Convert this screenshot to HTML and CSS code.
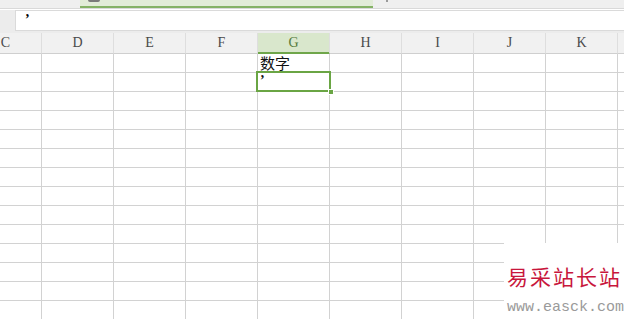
FILE: index.html
```html
<!DOCTYPE html>
<html>
	<head>
		<meta charset="UTF-8">
		<title>数字</title>
		<link rel="stylesheet" href="styles.css">
	</head>
	<body>
		<div class="tabs">
			<div class="tab"><span class="tab-icon"></span></div>
			<span class="tab-mark"></span>
		</div>
		<div class="formula">
			<div class="formula-input">’</div>
		</div>
		<table class="sheet">
			<thead>
				<tr>
					<th>C</th><th>D</th><th>E</th><th>F</th><th class="cur">G</th>
					<th>H</th><th>I</th><th>J</th><th>K</th><th class="edge"></th>
				</tr>
			</thead>
			<tbody id="rows"></tbody>
		</table>
		<div class="mark">
			<p class="mark-name">易采站长站</p>
			<p class="mark-url">www.easck.com</p>
		</div>
		<script type="text/javascript">
			var body = document.getElementById('rows');
			//生成空白行
			for(var i=0;i<14;i++){
				var tr = document.createElement('tr');
				for(var j=0;j<10;j++){
					var td = document.createElement('td');
					tr.appendChild(td);
				}
				body.appendChild(tr);
			}
			//G列内容
			body.rows[0].cells[4].innerHTML = '数字';
			body.rows[1].cells[4].innerHTML = '’';
			body.rows[1].cells[4].className = 'active';
		</script>
	</body>
</html>
```

FILE: styles.css
```css
body{
	margin: 0;
	width: 624px;
	height: 319px;
	overflow: hidden;
	position: relative;
	background: #fff;
	font-family: "Liberation Serif", serif;
}
.tabs{
	height: 8px;
	background: #efefef;
	border-bottom: 1px solid #d9d9d9;
	display: flex;
}
.tab{
	margin-left: 80px;
	width: 293px;
	height: 6px;
	background: #e2ecd8;
	border-bottom: 2px solid #85b266;
}
.tab-icon{
	display: block;
	margin-left: 8px;
	width: 12px;
	height: 2px;
	background: #7a7a7a;
	border-radius: 0 0 2px 2px;
}
.tab-mark{
	margin-left: 13px;
	width: 2px;
	height: 2px;
	background: #9a9a9a;
}
.formula{
	height: 23px;
	background: #ececec;
	padding-left: 15px;
}
.formula-input{
	height: 21px;
	margin-top: 1px;
	background: #fff;
	border: 1px solid #dadada;
	border-right: 0;
	box-sizing: border-box;
	padding: 2px 0 0 9px;
	font: bold 14px/14px "Liberation Serif", serif;
	color: #000;
}
.sheet{
	margin-left: -30px;
	width: 654px;
	table-layout: fixed;
	border-collapse: separate;
	border-spacing: 0;
}
.sheet th,
.sheet td{
	width: 72px;
	box-sizing: border-box;
	padding: 0;
	border-right: 1px solid #d2d2d2;
	border-bottom: 1px solid #d2d2d2;
}
.sheet th.edge{
	width: 6px;
	border-right: 0;
}
.sheet td:last-child{
	border-right: 0;
}
.sheet th{
	height: 21px;
	background: #f1f1f1;
	border-right-color: #dedede;
	border-bottom-color: #cfcfcf;
	font: normal 14px/20px "Liberation Serif", serif;
	color: #4a4a4a;
	text-align: center;
}
.sheet th.cur{
	background: #d9e7cc;
	border-bottom-color: #6fa64a;
	box-shadow: inset 0 -1px 0 #6fa64a;
	color: #557a3b;
}
.sheet td{
	height: 19px;
	font: 15px/17px "Noto Sans CJK SC", sans-serif;
	color: #111;
	padding-left: 2px;
	vertical-align: top;
	white-space: nowrap;
}
.sheet td.active{
	position: relative;
	font: bold 14px/16px "Liberation Serif", serif;
}
.sheet td.active:after{
	content: '';
	position: absolute;
	left: -2px;
	top: -2px;
	width: 75px;
	height: 21px;
	border: 2px solid #6aa544;
	box-sizing: border-box;
}
.sheet td.active:before{
	content: '';
	position: absolute;
	left: 70px;
	top: 16px;
	width: 4px;
	height: 4px;
	background: #6aa544;
	border: 1px solid #fff;
	z-index: 1;
}
.mark{
	position: absolute;
	left: 504px;
	top: 243px;
	right: 0;
	bottom: 0;
	background: #fff;
	padding-left: 3px;
}
.mark p{
	margin: 0;
	white-space: nowrap;
}
.mark-name{
	margin-top: 20px !important;
	font: 21px/26px "Noto Sans CJK SC", sans-serif;
	letter-spacing: 2px;
	color: #c8163c;
}
.mark-url{
	margin-top: 11px !important;
	font: 15px/15px "Liberation Mono", monospace;
	color: #9a9a9a;
}
```
